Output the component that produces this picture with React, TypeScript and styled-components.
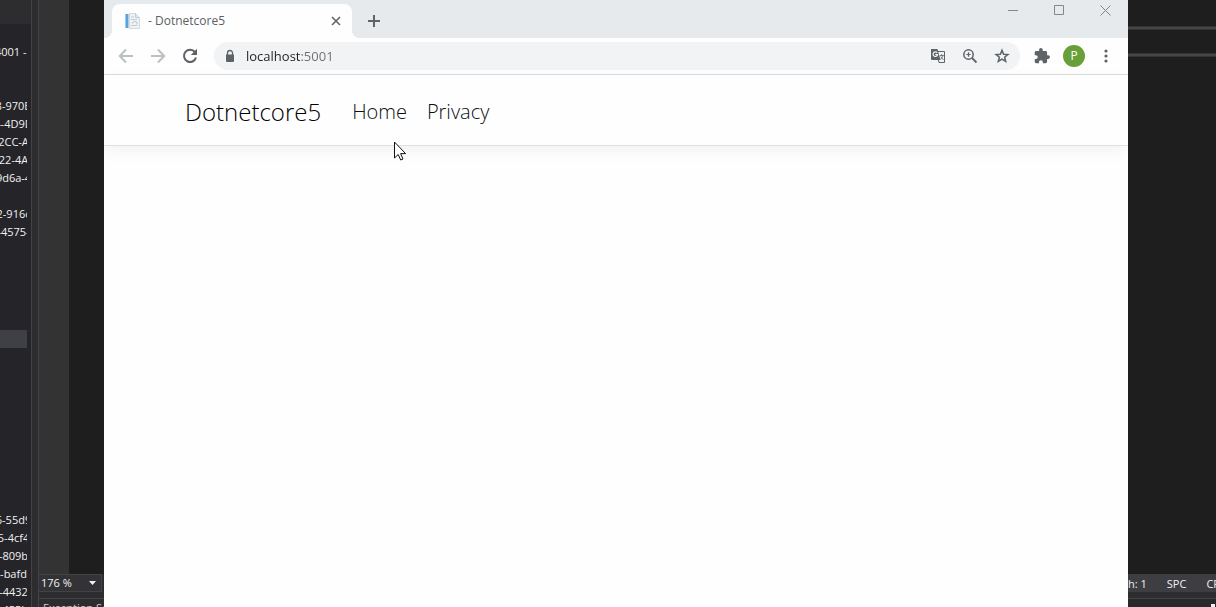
import React from "react";
import styled, { createGlobalStyle } from "styled-components";

const ui = `"Segoe UI", "Open Sans", "Noto Sans", sans-serif`;

const GlobalStyle = createGlobalStyle`
  * { box-sizing: border-box; }
  body { margin: 0; background: #1e1e1e; font-family: ${ui}; overflow: hidden; }
  button { border: 0; padding: 0; background: none; font: inherit; color: inherit; }
`;

const Desktop = styled.div`
  display: grid;
  grid-template-columns: 104px minmax(0, 1fr) 88px;
  height: 100vh;
  overflow: hidden;
`;

/* Editor, left of the browser window */
const EditorLeft = styled.aside`
  display: grid;
  grid-template-columns: 32px 6px minmax(0, 1fr);
  min-height: 0;
  background: #2d2d30;
`;

const Explorer = styled.div`
  min-height: 0;
  overflow: hidden;
  padding-right: 4px;
  background: #252428;
  border-right: 1px solid #434347;
`;

const ExplorerHead = styled.div`
  height: 24px;
  margin: 0 -4px 18px 0;
  background: #2d2d30;
`;

const TreeRow = styled.div<{ $selected?: boolean }>`
  display: flex;
  justify-content: center;
  height: 18px;
  overflow: hidden;
  white-space: nowrap;
  font-size: 11px;
  line-height: 20px;
  color: #f1f1f1;
  background: ${(p) => (p.$selected ? "#3f3f46" : "transparent")};
`;

const Pane = styled.div`
  display: flex;
  flex-direction: column;
  min-width: 0;
  min-height: 0;
  border-left: 1px solid #434347;
`;

const Code = styled.div`
  flex: 1;
  background: #1e1e1e;
  border-left: 30px solid #333333;
`;

const ZoomBox = styled.div`
  display: flex;
  align-items: center;
  position: relative;
  height: 18px;
  margin-right: 2px;
  background: #333337;
  border: 1px solid #434346;
  border-left: 0;
`;

const ZoomSelect = styled.select`
  appearance: none;
  width: 100%;
  padding: 0 2px;
  border: 0;
  background: transparent;
  color: #f1f1f1;
  font: 11px/16px ${ui};
`;

const Caret = styled.svg`
  position: absolute;
  right: 5px;
  pointer-events: none;
`;

const BottomPanel = styled.div`
  height: 9px;
  margin-top: 6px;
  padding-left: 4px;
  overflow: hidden;
  white-space: nowrap;
  border-top: 1px solid #434347;
  color: #d0d0d0;
  font-size: 11px;
  line-height: 18px;
`;

/* Editor, right of the browser window */
const EditorRight = styled.aside`
  display: flex;
  flex-direction: column;
  min-width: 0;
  background: #1e1e1e;
`;

const Divider = styled.div`
  height: 4px;
  margin-top: 23px;
  border: solid #333335;
  border-width: 1px 0;
  background: #464646;
  &:first-child { margin-top: 26px; }
`;

const Fill = styled.div`
  flex: 1;
`;

const StatusBar = styled.div`
  display: flex;
  gap: 20px;
  height: 18px;
  overflow: hidden;
  white-space: nowrap;
  background: #3e3e42;
  color: #f1f1f1;
  font-size: 11px;
  line-height: 20px;
`;

const StatusFoot = styled.div`
  display: flex;
  justify-content: flex-end;
  height: 15px;
  padding: 12px 1px 0;
  background: linear-gradient(#2d2d30 6px, #434347 6px, #434347 7px, #29292b 7px);
`;

const Pin = styled.span`
  width: 4px;
  height: 3px;
  background: #f1f1f1;
`;

/* Browser window */
const Browser = styled.main`
  display: flex;
  flex-direction: column;
  position: relative;
  min-width: 0;
  overflow: hidden;
  background: #fefefe;
`;

const TabStrip = styled.div`
  display: flex;
  align-items: flex-start;
  height: 38px;
  padding-left: 8px;
  background: #e6eaed;
`;

const Tab = styled.div`
  display: flex;
  align-items: center;
  position: relative;
  width: 240px;
  height: 34px;
  margin-top: 4px;
  padding: 0 10px 0 12px;
  border-radius: 8px 8px 0 0;
  background: #fefefe;
  color: #5b5f63;
  &::before, &::after {
    content: "";
    position: absolute;
    bottom: 0;
    width: 8px;
    height: 8px;
  }
  &::before {
    left: -8px;
    background: radial-gradient(circle at 0 0, transparent 8px, #fefefe 8px);
  }
  &::after {
    right: -8px;
    background: radial-gradient(circle at 100% 0, transparent 8px, #fefefe 8px);
  }
`;

const TabTitle = styled.span`
  flex: 1;
  padding-left: 7px;
  font-size: 12px;
  line-height: 16px;
`;

const IconButton = styled.button<{ $w?: number; $tone?: string }>`
  display: flex;
  align-items: center;
  justify-content: center;
  width: ${(p) => p.$w ?? 32}px;
  height: 28px;
  color: ${(p) => p.$tone ?? "#5f6368"};
`;

const NewTab = styled(IconButton)`
  margin: 7px auto 0 6px;
`;

const WindowButton = styled(IconButton)`
  height: 20px;
`;

const Toolbar = styled.div`
  display: flex;
  align-items: center;
  height: 37px;
  padding: 0 6px;
  border-bottom: 1px solid #dadcde;
`;

const Omnibox = styled.div`
  display: flex;
  flex: 1;
  align-items: center;
  height: 28px;
  margin: 0 6px 0 8px;
  padding: 0 2px 0 8px;
  border-radius: 14px;
  background: #f1f3f4;
`;

const Address = styled.input`
  flex: 1;
  min-width: 0;
  margin-left: 8px;
  padding: 0;
  border: 0;
  outline: 0;
  background: linear-gradient(90deg, #202124 55px, #6b6f73 55px);
  background-clip: text;
  color: transparent;
  font: 13px/20px ${ui};
`;

const Avatar = styled.button`
  width: 22px;
  height: 22px;
  margin: 0 5px;
  border-radius: 50%;
  background: #689f38;
  color: #fff;
  font-size: 12px;
  line-height: 22px;
`;

const SiteHeader = styled.header`
  height: 71px;
  border-bottom: 1px solid #dee0e2;
  box-shadow: 0 5px 15px rgba(0, 0, 0, 0.05);
`;

const SiteNav = styled.nav`
  display: flex;
  align-items: center;
  max-width: 900px;
  height: 72px;
  margin: 0 auto;
  padding: 0 19px;
  font-weight: 300;
`;

const Brand = styled.a`
  margin-right: 31px;
  color: #000;
  font-size: 24px;
  text-decoration: none;
`;

const NavLink = styled.a`
  margin-right: 20px;
  color: #0c0f12;
  font-size: 20px;
  text-decoration: none;
`;

const Pointer = styled.svg`
  position: absolute;
  left: 290px;
  top: 141px;
`;

const rows = [
  "4001 - l", "", "", "8-970B", "4-4D9D", "2CC-A", "022-4A1", "9d6a-4", "", "2-916c", "-4575-",
  "", "", "", "", "", "*", "", "", "", "", "", "", "", "", "",
  "6-55d9", "5-4cf4", "-809b", "-bafd", "-4432", "-455b",
];

const stroke = { fill: "none", stroke: "currentColor", strokeWidth: 2 };

export default function App() {
  return (
    <Desktop>
      <GlobalStyle />
      <EditorLeft>
        <Explorer>
          <ExplorerHead />
          {rows.map((t, i) => (
            <TreeRow key={i} $selected={t === "*"}>{t === "*" ? "" : <span>{t}</span>}</TreeRow>
          ))}
        </Explorer>
        <div />
        <Pane>
          <Code />
          <ZoomBox>
            <ZoomSelect aria-label="Editor zoom" defaultValue="176 %">
              <option>176 %</option>
              <option>100 %</option>
            </ZoomSelect>
            <Caret width="7" height="4"><path d="M0 0h7L3.5 4z" fill="#f1f1f1" /></Caret>
          </ZoomBox>
          <BottomPanel>Exception Settings</BottomPanel>
        </Pane>
      </EditorLeft>

      <Browser>
        <TabStrip>
          <Tab>
            <svg width="17" height="16" viewBox="0 0 17 16">
              <path d="M5.5.5h6l4 4v11h-10z" fill="#eef2f4" stroke="#d3dade" />
              <path d="M11.500.5v4h4" fill="#dfe5e8" stroke="#c3cbd0" />
              <path d="M7 4h3M7 6.500h6M7 12.500h6" stroke="#c5cdd1" />
              <path d="M8 10.500a3 3 0 0 1 5-1v2" fill="none" stroke="#b9c2c7" />
              <path d="M1 1h3.500v14H1z" fill="#5ba3dc" />
              <path d="M1 1h1v14H1z" fill="#9ccbed" />
            </svg>
            <TabTitle>- Dotnetcore5</TabTitle>
            <IconButton $w={12} aria-label="Close tab">
              <svg width="10" height="10"><path d="M1 1l8 8M9 1L1 9" {...stroke} strokeWidth="1.6" /></svg>
            </IconButton>
          </Tab>
          <NewTab aria-label="New tab">
            <svg width="12" height="12"><path d="M6 0v12M0 6h12" {...stroke} /></svg>
          </NewTab>
          <WindowButton $w={46} $tone="#85888b" aria-label="Minimize">
            <svg width="10" height="10"><path d="M0 5.500h10" {...stroke} strokeWidth="1" /></svg>
          </WindowButton>
          <WindowButton $w={46} $tone="#85888b" aria-label="Maximize">
            <svg width="10" height="10"><path d="M.5.5h9v9h-9z" {...stroke} strokeWidth="1" /></svg>
          </WindowButton>
          <WindowButton $w={46} $tone="#85888b" aria-label="Close window">
            <svg width="11" height="11"><path d="M.5.5l10 10M10.500.5l-10 10" {...stroke} strokeWidth="1" /></svg>
          </WindowButton>
        </TabStrip>

        <Toolbar>
          <IconButton $tone="#bbc1c2" aria-label="Back">
            <svg width="16" height="16"><path d="M15 8H2M8 1.500L1.800 8 8 14.500" {...stroke} /></svg>
          </IconButton>
          <IconButton $tone="#bbc1c2" aria-label="Forward">
            <svg width="16" height="16"><path d="M1 8h13M8 1.500L14.200 8 8 14.500" {...stroke} /></svg>
          </IconButton>
          <IconButton aria-label="Reload">
            <svg width="16" height="16">
              <path d="M13 4.200A6.100 6.100 0 1 0 14 9.500" {...stroke} />
              <path d="M15 .8v6.200H8.800z" fill="currentColor" />
            </svg>
          </IconButton>
          <Omnibox>
            <svg width="16" height="16" color="#5f6368">
              <path d="M4 6.500h8v6.500a1 1 0 0 1-1 1H5a1 1 0 0 1-1-1z" fill="currentColor" />
              <path d="M5.500 7V5a2.500 2.500 0 0 1 5 0v2" {...stroke} strokeWidth="1.300" />
            </svg>
            <Address aria-label="Address" defaultValue="localhost:5001" />
            <IconButton aria-label="Translate this page">
              <svg width="16" height="16">
                <path d="M6 3.500h8.500v11H9z" fill="#f1f3f4" stroke="currentColor" />
                <path d="M1 1h6.500L10.500 12H2a1 1 0 0 1-1-1z" fill="currentColor" />
                <path d="M7.200 4.800a2.300 2.300 0 1 0 .4 1.900H5.300" fill="none" stroke="#f1f3f4" strokeWidth="1.200" />
                <path d="M9.800 7.500h4M11.700 6v1.500M13 7.500c-.4 2-1.500 3-2.500 3.500M10.700 8.500l2.800 3.500" fill="none" stroke="currentColor" strokeWidth=".8" />
              </svg>
            </IconButton>
            <IconButton aria-label="Zoom">
              <svg width="16" height="16">
                <circle cx="6.500" cy="6.500" r="4.700" {...stroke} strokeWidth="1.500" />
                <path d="M10 10l4.500 4.500" {...stroke} strokeWidth="1.800" />
                <path d="M6.500 4.300v4.400M4.300 6.500h4.400" {...stroke} strokeWidth="1.200" />
              </svg>
            </IconButton>
            <IconButton aria-label="Bookmark this page">
              <svg width="16" height="16">
                <path d="M8 2.200l1.600 4 4.300.3-3.300 2.700 1.100 4.200L8 11.100l-3.700 2.300 1.100-4.200L2.100 6.500l4.300-.3z" {...stroke} strokeWidth="1.500" />
              </svg>
            </IconButton>
          </Omnibox>
          <IconButton aria-label="Extensions">
            <svg width="16" height="16" viewBox="1 1 22 22">
              <path fill="currentColor" d="M20.500 11H19V7c0-1.100-.9-2-2-2h-4V3.500a2.500 2.500 0 0 0-5 0V5H4c-1.100 0-2 .9-2 2v3.800h1.500a2.700 2.700 0 0 1 0 5.400H2V20c0 1.100.9 2 2 2h3.800v-1.500a2.700 2.700 0 0 1 5.400 0V22H17c1.100 0 2-.9 2-2v-4h1.500a2.500 2.500 0 0 0 0-5z" />
            </svg>
          </IconButton>
          <Avatar aria-label="Profile">P</Avatar>
          <IconButton aria-label="Menu">
            <svg width="16" height="16" fill="currentColor">
              <circle cx="8" cy="3" r="1.600" /><circle cx="8" cy="8" r="1.600" /><circle cx="8" cy="13" r="1.600" />
            </svg>
          </IconButton>
        </Toolbar>

        <SiteHeader>
          <SiteNav>
            <Brand href="#">Dotnetcore5</Brand>
            <NavLink href="#">Home</NavLink>
            <NavLink href="#">Privacy</NavLink>
          </SiteNav>
        </SiteHeader>
        <Pointer width="13" height="20">
          <path d="M.5 1v16l3.700-3.500 2.500 5.500 2.300-1-2.400-5.400h5z" fill="#fff" stroke="#111" />
        </Pointer>
      </Browser>

      <EditorRight>
        <Divider />
        <Divider />
        <Fill />
        <StatusBar><span>h: 1</span><span>SPC</span><span>CRLF</span></StatusBar>
        <StatusFoot><Pin /></StatusFoot>
      </EditorRight>
    </Desktop>
  );
}
